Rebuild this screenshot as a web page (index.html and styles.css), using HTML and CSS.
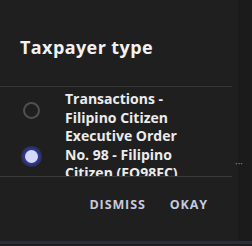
FILE: index.html
```html
<!DOCTYPE html>
<html lang="en">
<head>
  <meta charset="UTF-8" />
  <meta name="viewport" content="width=device-width, initial-scale=1.0" />
  <title>Taxpayer type</title>
  <link rel="stylesheet" href="styles.css">
</head>
<body>
  <div class="screen">
    <div class="dialog">
      <div class="dialog-title">Taxpayer type</div>

      <div class="choice-list">
        <div class="choice">
          <span class="radio"></span>
          <span class="choice-label">Transactions -<br>Filipino Citizen</span>
        </div>
        <div class="choice">
          <span class="radio radio-on"></span>
          <span class="choice-label">Executive Order<br>No. 98 - Filipino<br>Citizen (EO98FC)</span>
        </div>
      </div>

      <div class="dialog-actions">
        <button class="action">DISMISS</button>
        <button class="action">OKAY</button>
      </div>
    </div>
    <div class="side">
      <span class="scroll-dots">&middot;&middot;&middot;</span>
    </div>
  </div>
  <div class="nav-strip"></div>
</body>
</html>
```

FILE: styles.css
```css
html, body {
  margin: 0;
  padding: 0;
  background-color: #1c1c1c;
  font-family: "Open Sans", "DejaVu Sans", sans-serif;
  overflow: hidden;
}

.screen {
  display: flex;
  height: 241px;
}

.dialog {
  width: 238px;
  background-color: #1f1f1f;
  display: flex;
  flex-direction: column;
}

.side {
  flex: 1;
  background-color: #1b1b1b;
  padding-top: 158px;
}

.dialog-title {
  color: #f2f2f2;
  font-size: 18px;
  font-weight: 700;
  letter-spacing: 0.4px;
  line-height: 22px;
  padding: 36px 0 0 20px;
  height: 50px;
}

.choice-list {
  height: 91px;
  border-top: 1px solid #363636;
  border-bottom: 1px solid #3a3a3a;
  margin-right: 6px;
  overflow: hidden;
  padding-top: 3px;
  box-sizing: border-box;
}

.choice {
  display: flex;
  align-items: center;
}

.radio {
  width: 13px;
  height: 13px;
  border: 2px solid #505050;
  border-radius: 50%;
  margin: 4px 25px 0 23px;
  flex-shrink: 0;
}

.radio-on {
  border-color: #2d3a8c;
  background-color: #d6d8fb;
  box-shadow: 0 0 0 2px rgba(60, 70, 170, 0.45);
}

.choice-label {
  color: #ececec;
  font-size: 14px;
  font-weight: 700;
  line-height: 18.5px;
}

.scroll-dots {
  display: block;
  color: #8a8a8a;
  font-size: 10px;
  line-height: 10px;
  margin-left: -3px;
}

.dialog-actions {
  display: flex;
  justify-content: flex-end;
  gap: 24px;
  padding: 19px 30px 0 0;
}

.action {
  background: none;
  border: none;
  padding: 0;
  color: #c9c9dc;
  font-family: "Open Sans", "DejaVu Sans", sans-serif;
  font-size: 12.5px;
  font-weight: 700;
  letter-spacing: 0.9px;
}

.nav-strip {
  height: 3px;
  background-color: #2b2b3d;
}
```
